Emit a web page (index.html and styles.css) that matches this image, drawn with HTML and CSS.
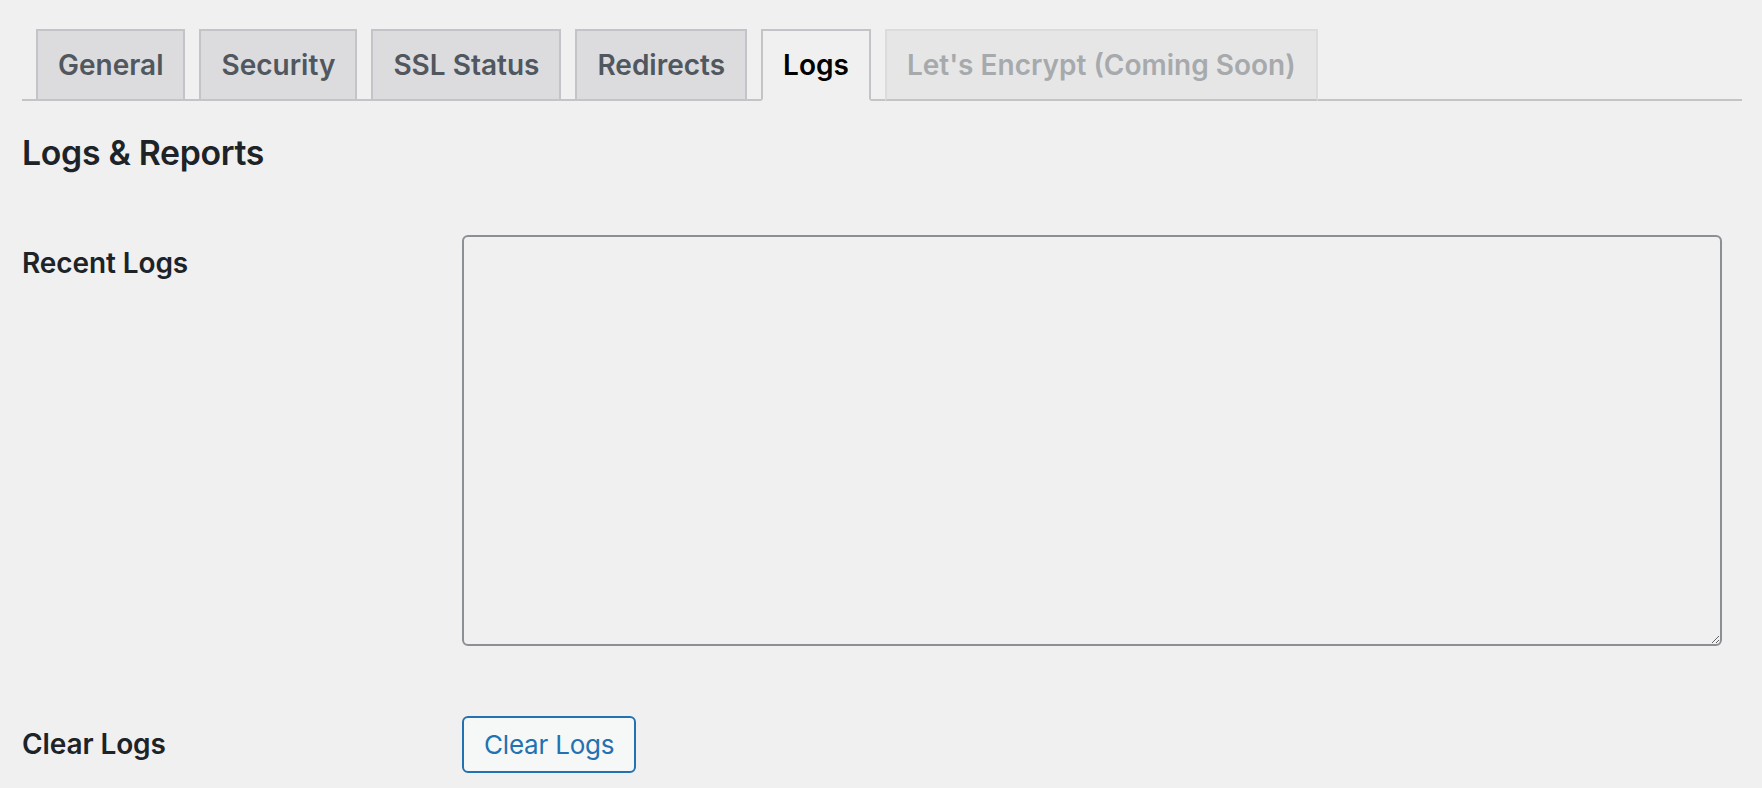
FILE: index.html
```html
<!DOCTYPE html>
<html lang="en">
<head>
<meta charset="utf-8">
<title>Logs &amp; Reports</title>
<link rel="stylesheet" href="styles.css">
</head>
<body>
<div class="wrap">
  <nav class="nav-tab-wrapper">
    <a class="nav-tab" href="#">General</a>
    <a class="nav-tab" href="#">Security</a>
    <a class="nav-tab" href="#">SSL Status</a>
    <a class="nav-tab" href="#">Redirects</a>
    <a class="nav-tab nav-tab-active" href="#">Logs</a>
    <span class="nav-tab nav-tab-disabled">Let's Encrypt (Coming Soon)</span>
  </nav>
  <h2 class="section-title">Logs &amp; Reports</h2>
  <div class="form-table">
    <div class="form-row">
      <div class="form-label">Recent Logs</div>
      <div class="form-field">
        <textarea class="logs-box" readonly></textarea>
      </div>
    </div>
    <div class="form-row">
      <div class="form-label">Clear Logs</div>
      <div class="form-field">
        <button class="button" type="button">Clear Logs</button>
      </div>
    </div>
  </div>
</div>
</body>
</html>
```
FILE: styles.css
```css
html, body {
  margin: 0;
  padding: 0;
  background: #f0f0f1;
}
body {
  font-family: Inter, "Noto Sans", "Liberation Sans", sans-serif;
  color: #1d2327;
  font-size: 26px;
}
.wrap {
  margin: 0 20px 0 22px;
}
.nav-tab-wrapper {
  display: flex;
  align-items: flex-end;
  padding-top: 29px;
  border-bottom: 2px solid #c3c4c7;
}
.nav-tab {
  display: block;
  margin-left: 14px;
  margin-bottom: -2px;
  padding: 10px 20px;
  font-size: 28px;
  line-height: 48px;
  font-weight: 600;
  color: #50575e;
  background: #dcdcde;
  border: 2px solid #c3c4c7;
  text-decoration: none;
  white-space: nowrap;
}
.nav-tab-active {
  background: #f0f0f1;
  color: #000;
  border-bottom-color: #f0f0f1;
}
.nav-tab-disabled {
  background: #e6e6e7;
  border-color: #dcdcde;
  border-bottom-color: #c3c4c7;
  color: #a7aaad;
}
.section-title {
  margin: 32px 0 32px;
  font-size: 33.8px;
  line-height: 40px;
  font-weight: 600;
  color: #1d2327;
  letter-spacing: -0.3px;
}
.form-row {
  display: flex;
}
.form-label {
  flex: 0 0 400px;
  padding: 40px 20px 40px 0;
  font-size: 28px;
  line-height: 36px;
  font-weight: 600;
  color: #1d2327;
  letter-spacing: -0.1px;
}
.form-field {
  flex: 1 1 auto;
  padding: 30px 20px;
}
.logs-box {
  display: block;
  box-sizing: border-box;
  width: 100%;
  height: 411px;
  margin: 0 0 10px;
  background: #f0f0f1;
  border: 2px solid #8c8f94;
  border-radius: 6px;
  font-family: inherit;
  font-size: 26px;
}
.button {
  display: inline-block;
  box-sizing: border-box;
  height: 57px;
  padding: 0 20px;
  font-family: inherit;
  font-size: 26px;
  line-height: 53px;
  font-weight: 400;
  color: #2271b1;
  background: #f6f7f7;
  border: 2px solid #2271b1;
  border-radius: 6px;
  cursor: pointer;
  letter-spacing: -0.2px;
}
```
